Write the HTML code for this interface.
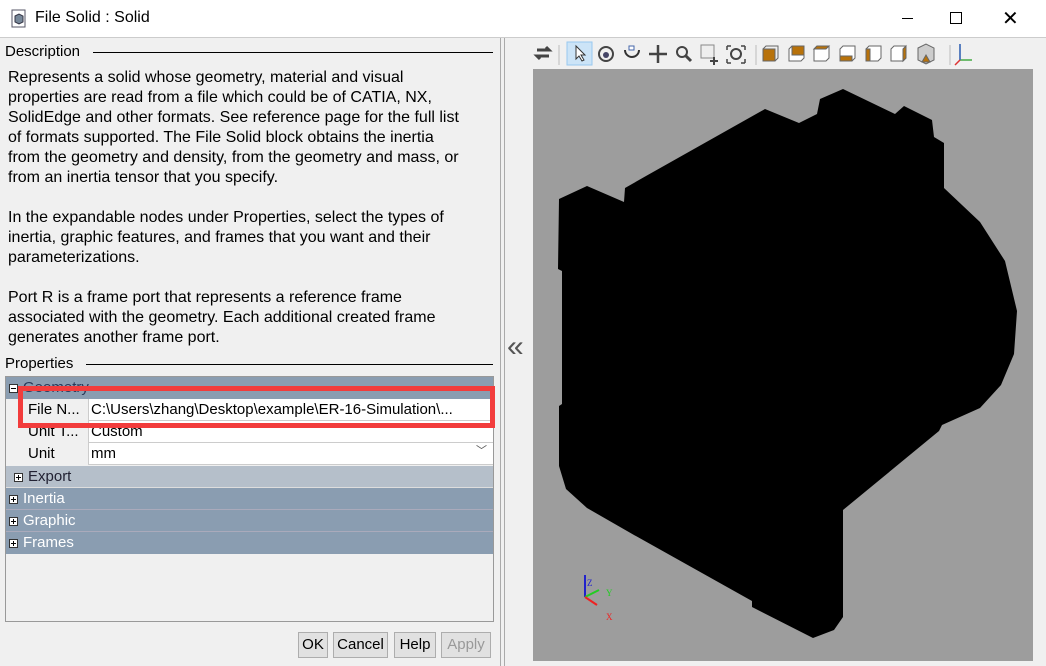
<!DOCTYPE html>
<html><head><meta charset="utf-8"><style>
*{margin:0;padding:0;box-sizing:border-box}
body{width:1046px;height:666px;background:#f0f0f0;font-family:"Liberation Sans","Noto Sans CJK SC",sans-serif;font-size:15px;color:#000;position:relative;overflow:hidden}
.abs{position:absolute}
.title{left:0;top:0;width:1046px;height:37px;background:#fff;}
.desc{left:8px;top:68px;width:492px;line-height:20px;font-size:16px;white-space:nowrap}
.row{position:absolute;left:6px;width:487px;height:22px;font-size:15px;line-height:21px}
.btn{position:absolute;top:632px;height:26px;border:1px solid #adadad;background:#e1e1e1;font-size:15px;line-height:24px;text-align:center}
.pl{display:inline-block;width:9px;height:9px;border:1px solid #333;background:#fff;position:relative;vertical-align:middle;margin-right:5px}
.pl:before{content:"";position:absolute;left:1px;top:3px;width:5px;height:1px;background:#000}
.pl.p:after{content:"";position:absolute;left:3px;top:1px;width:1px;height:5px;background:#000}
</style></head><body>
<div class="abs title">
 <svg class="abs" style="left:10px;top:9px" width="18" height="20"><rect x="2" y="1" width="13" height="17" fill="#fff" stroke="#556"/><path d="M5 7l4-2 4 2v6l-4 2-4-2z" fill="#789" stroke="#334"/></svg>
 <div class="abs" style="left:35px;top:9px;font-size:16px">File Solid : Solid</div>
 <div class="abs" style="left:902px;top:18px;width:11px;height:1px;background:#000"></div>
 <div class="abs" style="left:950px;top:12px;width:12px;height:12px;border:1px solid #000"></div>
 <div class="abs" style="left:1002px;top:6px;font-size:20px">✕</div>
</div>
<div class="abs" style="left:0;top:37px;width:1046px;height:1px;background:#ccc"></div>
<div class="abs" style="left:5px;top:43px;font-size:15px">Description</div>
<div class="abs" style="left:93px;top:52px;width:400px;height:1px;background:#000"></div>
<div class="abs desc">Represents a solid whose geometry, material and visual<br>properties are read from a file which could be of CATIA, NX,<br>SolidEdge and other formats. See reference page for the full list<br>of formats supported. The File Solid block obtains the inertia<br>from the geometry and density, from the geometry and mass, or<br>from an inertia tensor that you specify.<br><br>In the expandable nodes under Properties, select the types of<br>inertia, graphic features, and frames that you want and their<br>parameterizations.<br><br>Port R is a frame port that represents a reference frame<br>associated with the geometry. Each additional created frame<br>generates another frame port.</div>
<div class="abs" style="left:5px;top:355px">Properties</div>
<div class="abs" style="left:86px;top:364px;width:407px;height:1px;background:#000"></div>
<div class="abs" style="left:5px;top:376px;width:489px;height:246px;border:1px solid #999;background:#f0f0f0"></div>
<div class="row" style="top:377px;background:#8a9db1;color:#2a3a5a;padding-left:3px"><span class="pl"></span>Geometry</div>
<div class="row" style="top:399px;background:#fff;border-bottom:1px solid #ccc"><div class="abs" style="left:0;top:0;width:83px;height:22px;background:#f0f0f0;border-right:1px solid #ccc;padding-left:22px">File N...</div><div class="abs" style="left:85px">C:\Users\zhang\Desktop\example\ER-16-Simulation\...</div></div>
<div class="row" style="top:421px;background:#fff;border-bottom:1px solid #ccc"><div class="abs" style="left:0;top:0;width:83px;height:22px;background:#f0f0f0;border-right:1px solid #ccc;padding-left:22px">Unit T...</div><div class="abs" style="left:85px">Custom</div><div class="abs" style="right:6px;top:-2px;font-size:11px;color:#555">﹀</div></div>
<div class="row" style="top:443px;background:#fff;border-bottom:1px solid #ccc"><div class="abs" style="left:0;top:0;width:83px;height:22px;background:#f0f0f0;border-right:1px solid #ccc;padding-left:22px">Unit</div><div class="abs" style="left:85px">mm</div><div class="abs" style="right:6px;top:-2px;font-size:11px;color:#555">﹀</div></div>
<div class="row" style="top:466px;background:#b5bfca;color:#223;padding-left:8px;border-bottom:1px solid #ddd"><span class="pl p"></span>Export</div>
<div class="row" style="top:488px;background:#8a9db1;color:#fff;padding-left:3px;border-bottom:1px solid #aab"><span class="pl p"></span>Inertia</div>
<div class="row" style="top:510px;background:#8a9db1;color:#fff;padding-left:3px;border-bottom:1px solid #aab"><span class="pl p"></span>Graphic</div>
<div class="row" style="top:532px;background:#8a9db1;color:#fff;padding-left:3px"><span class="pl p"></span>Frames</div>
<div class="abs" style="left:18px;top:386px;width:477px;height:42px;border:5px solid #f23c3c"></div>
<div class="btn" style="left:298px;width:30px">OK</div>
<div class="btn" style="left:333px;width:55px">Cancel</div>
<div class="btn" style="left:394px;width:42px">Help</div>
<div class="btn" style="left:441px;width:50px;color:#999">Apply</div>
<div class="abs" style="left:500px;top:38px;width:1px;height:628px;background:#aaa"></div>
<div class="abs" style="left:504px;top:38px;width:542px;height:628px;border-left:1px solid #aaa"></div>
<svg class="abs" style="left:500px;top:36px" width="546" height="34">
 <path d="M37 14h12l-3-3M49 20h-12l3 3" stroke="#444" stroke-width="3" fill="none"/>
 <rect x="67" y="6" width="25" height="23" fill="#cce4f7" stroke="#99c9ef"/>
 <path d="M76 10v13l3-3 3 5 2-1-3-5h4z" fill="#fff" stroke="#333"/>
 <circle cx="106" cy="18" r="7" fill="none" stroke="#444" stroke-width="2"/><circle cx="106" cy="19" r="3" fill="#446"/>
 <path d="M125 14a7 7 0 0 0 14 0" fill="none" stroke="#333" stroke-width="2"/><rect x="129" y="10" width="5" height="4" fill="#fff" stroke="#46a"/>
 <path d="M158 9v18M149 18h18" stroke="#444" stroke-width="2.5"/>
 <circle cx="182" cy="16" r="5" fill="none" stroke="#444" stroke-width="2"/><path d="M186 20l5 5" stroke="#444" stroke-width="3"/>
 <rect x="201" y="9" width="13" height="13" fill="#eee" stroke="#888"/><path d="M210 25h8M214 21v8" stroke="#444" stroke-width="2"/>
 <circle cx="236" cy="18" r="5" fill="none" stroke="#444" stroke-width="2"/><path d="M227 10h4M227 10v4M245 10h-4M245 10v4M227 27h4M227 27v-4M245 27h-4M245 27v-4" stroke="#444" stroke-width="1.5"/>
 <g stroke="#666" fill="#fff">
 <path d="M263 13l3-3h12v12l-3 3h-12z" fill="#eee"/><rect x="263" y="13" width="12" height="12" fill="#b8720a"/>
 <path d="M289 13l3-3h12v12l-3 3h-12z"/><rect x="292" y="10" width="12" height="9" fill="#b8720a"/>
 <path d="M314 13l3-3h12v12l-3 3h-12z"/><path d="M314 13l3-3h12l-3 3z" fill="#b8720a"/>
 <path d="M340 13l3-3h12v12l-3 3h-12z"/><rect x="340" y="20" width="12" height="5" fill="#b8720a"/>
 <path d="M366 13l3-3h12v12l-3 3h-12z"/><rect x="366" y="13" width="4" height="12" fill="#b8720a"/>
 <path d="M391 13l3-3h12v12l-3 3h-12z"/><path d="M403 13l3-3v12l-3 3z" fill="#b8720a"/>
 <path d="M418 12l8-4 8 4v12l-8 4-8-4z" fill="#ccc"/><path d="M422 26l4-7 4 7z" fill="#b8720a"/>
 </g>
 <path d="M460 8v16h12" stroke="#4a4" stroke-width="1.5" fill="none"/><path d="M460 8v16" stroke="#46c" stroke-width="1.5"/><path d="M460 24l-5 5" stroke="#d33" stroke-width="1.5"/>
 <g stroke="#bbb"><path d="M59 9v20M256 9v20M450 9v20"/></g>
</svg>
<div class="abs" style="left:507px;top:330px;font-size:30px;color:#555">«</div>
<div class="abs" style="left:533px;top:69px;width:500px;height:592px;background:#9d9d9d"></div>
<svg class="abs" style="left:0;top:0" width="1046" height="666">
 <path d="M559 199L587 186L624 202L625 188L646 176L765 109L799 123L817 114L820 99L843 89L895 114L904 106L932 120L934 137L944 143L944 188L980 222L1005 261L1017 311L1014 354L1001 385L980 408L942 425L939 431L843 510L843 617L834 630L813 638L752 607L752 601L634 535L587 508L566 489L559 466L559 406L562 404L562 271L558 269Z" fill="#000"/>
 <path d="M585 575v22" stroke="#22c" stroke-width="2"/><path d="M585 597l14-7" stroke="#2c2" stroke-width="2"/><path d="M585 597l12 8" stroke="#e22" stroke-width="2"/>
 <text x="587" y="586" font-size="9" fill="#22c" font-family="Liberation Serif">Z</text>
 <text x="606" y="596" font-size="9" fill="#2c2" font-family="Liberation Serif">Y</text>
 <text x="606" y="620" font-size="9" fill="#e22" font-family="Liberation Serif">X</text>
</svg>
</body></html>
